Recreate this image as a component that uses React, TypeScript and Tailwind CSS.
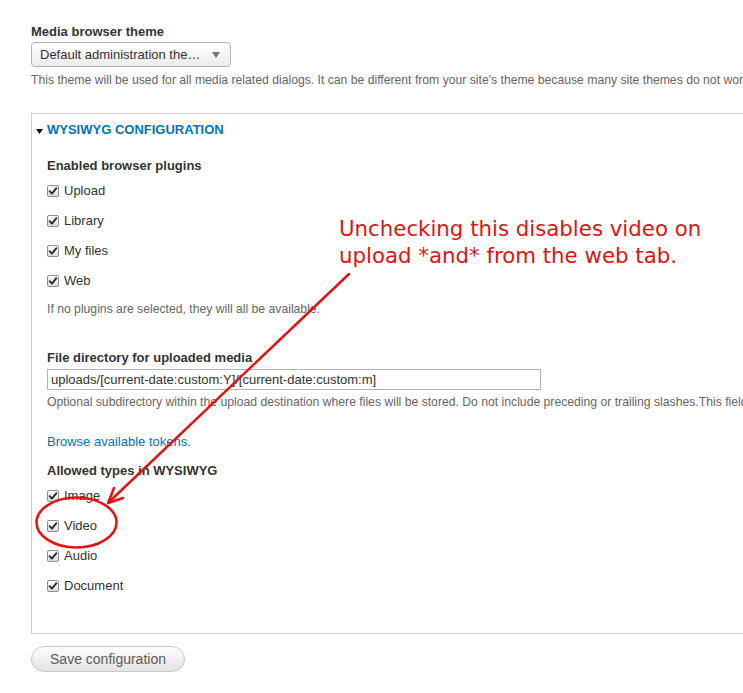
import React from "react";

function Check({ label }: { label: string }) {
  return (
    <div className="flex items-center h-[18px]">
      <span className="w-[12px] h-[12px] rounded-[2px] border border-[#8f8f8f] bg-gradient-to-b from-[#fcfcfc] to-[#dcdcdc] flex items-center justify-center shrink-0">
        <svg width="10" height="10" viewBox="0 0 10 10">
          <path d="M1.6 5.2 L3.9 7.6 L8.4 2.2" fill="none" stroke="#2b2b2b" strokeWidth="1.9" strokeLinecap="round" strokeLinejoin="round" />
        </svg>
      </span>
      <span className="ml-[5px] text-[13px] text-[#333]">{label}</span>
    </div>
  );
}

export default function App() {
  return (
    <div className="relative w-[743px] h-[693px] overflow-hidden bg-white font-['Liberation_Sans',Arial,sans-serif] whitespace-nowrap">
      <div className="pl-[31px] pt-[23px]">
        <div className="text-[13px] leading-[18px] font-bold text-[#333]">Media browser theme</div>
        <div className="mt-[1px] w-[200px] h-[25px] rounded-[4px] border border-[#b4b4b4] bg-gradient-to-b from-white to-[#ececec] flex items-center pl-[8px] pr-[10px] justify-between">
          <span className="text-[13px] text-[#333]">Default administration the…</span>
          <svg width="8" height="6" viewBox="0 0 8 6"><path d="M0 0 L8 0 L4 6 Z" fill="#777" /></svg>
        </div>
        <div className="mt-[4px] text-[12.2px] leading-[18px] text-[#666]">
          This theme will be used for all media related dialogs. It can be different from your site's theme because many site themes do not work well in the context of a dialog.
        </div>
        <div className="mt-[24px] w-[800px] border border-[#ccc] pb-[38px]">
          <div className="pt-[7px] pl-[4px] flex items-center h-[25px]">
            <svg width="7" height="5" viewBox="0 0 7 5" className="mt-[2px]"><path d="M0 0 L7 0 L3.5 5 Z" fill="#111" /></svg>
            <span className="ml-[4px] text-[13px] leading-[18px] font-bold text-[#0074bd] uppercase">WYSIWYG configuration</span>
          </div>
          <div className="pl-[15px]">
            <div className="mt-[18px] text-[13px] leading-[18px] font-bold text-[#333]">Enabled browser plugins</div>
            <div className="mt-[7px] flex flex-col gap-[12px]">
              <Check label="Upload" />
              <Check label="Library" />
              <Check label="My files" />
              <Check label="Web" />
            </div>
            <div className="mt-[10px] text-[12.2px] leading-[18px] text-[#666]">If no plugins are selected, they will all be available.</div>
            <div className="mt-[31px] text-[13px] leading-[18px] font-bold text-[#333]">File directory for uploaded media</div>
            <div className="mt-[2px] w-[494px] h-[21px] border border-[#b4b4b4] flex items-center pl-[3px] text-[13px] text-[#333]">
              uploads/[current-date:custom:Y]/[current-date:custom:m]
            </div>
            <div className="mt-[3px] text-[12.2px] leading-[18px] text-[#666]">
              Optional subdirectory within the upload destination where files will be stored. Do not include preceding or trailing slashes.This field supports tokens.
            </div>
            <div className="mt-[22px] text-[13px] leading-[18px] text-[#0074bd]">Browse available tokens.</div>
            <div className="mt-[11px] text-[13px] leading-[18px] font-bold text-[#333]">Allowed types in WYSIWYG</div>
            <div className="mt-[7px] flex flex-col gap-[12px]">
              <Check label="Image" />
              <Check label="Video" />
              <Check label="Audio" />
              <Check label="Document" />
            </div>
          </div>
        </div>
        <button className="mt-[12px] w-[154px] h-[26px] rounded-full border border-[#c8c8c8] bg-gradient-to-b from-[#fdfdfd] to-[#e3e3e3] text-[14px] text-[#5a5a5a] flex items-center justify-center">
          Save configuration
        </button>
      </div>

      <div className="absolute left-[339px] top-[215px] text-[21.3px] leading-[27px] text-[#dd1515] font-['DejaVu_Sans',sans-serif]">
        <div>Unchecking this disables video on</div>
        <div>upload *and* from the web tab.</div>
      </div>

      <svg className="absolute left-0 top-0 pointer-events-none" width="743" height="693" viewBox="0 0 743 693">
        <line x1="349" y1="274" x2="109" y2="502" stroke="#e81010" strokeWidth="2.5" strokeLinecap="round" />
        <path d="M114 488 L108 503 L123 498" fill="none" stroke="#e81010" strokeWidth="2.5" strokeLinecap="round" strokeLinejoin="round" />
        <ellipse cx="76.5" cy="522.5" rx="40" ry="25" fill="none" stroke="#e81010" strokeWidth="2.5" />
      </svg>
    </div>
  );
}
